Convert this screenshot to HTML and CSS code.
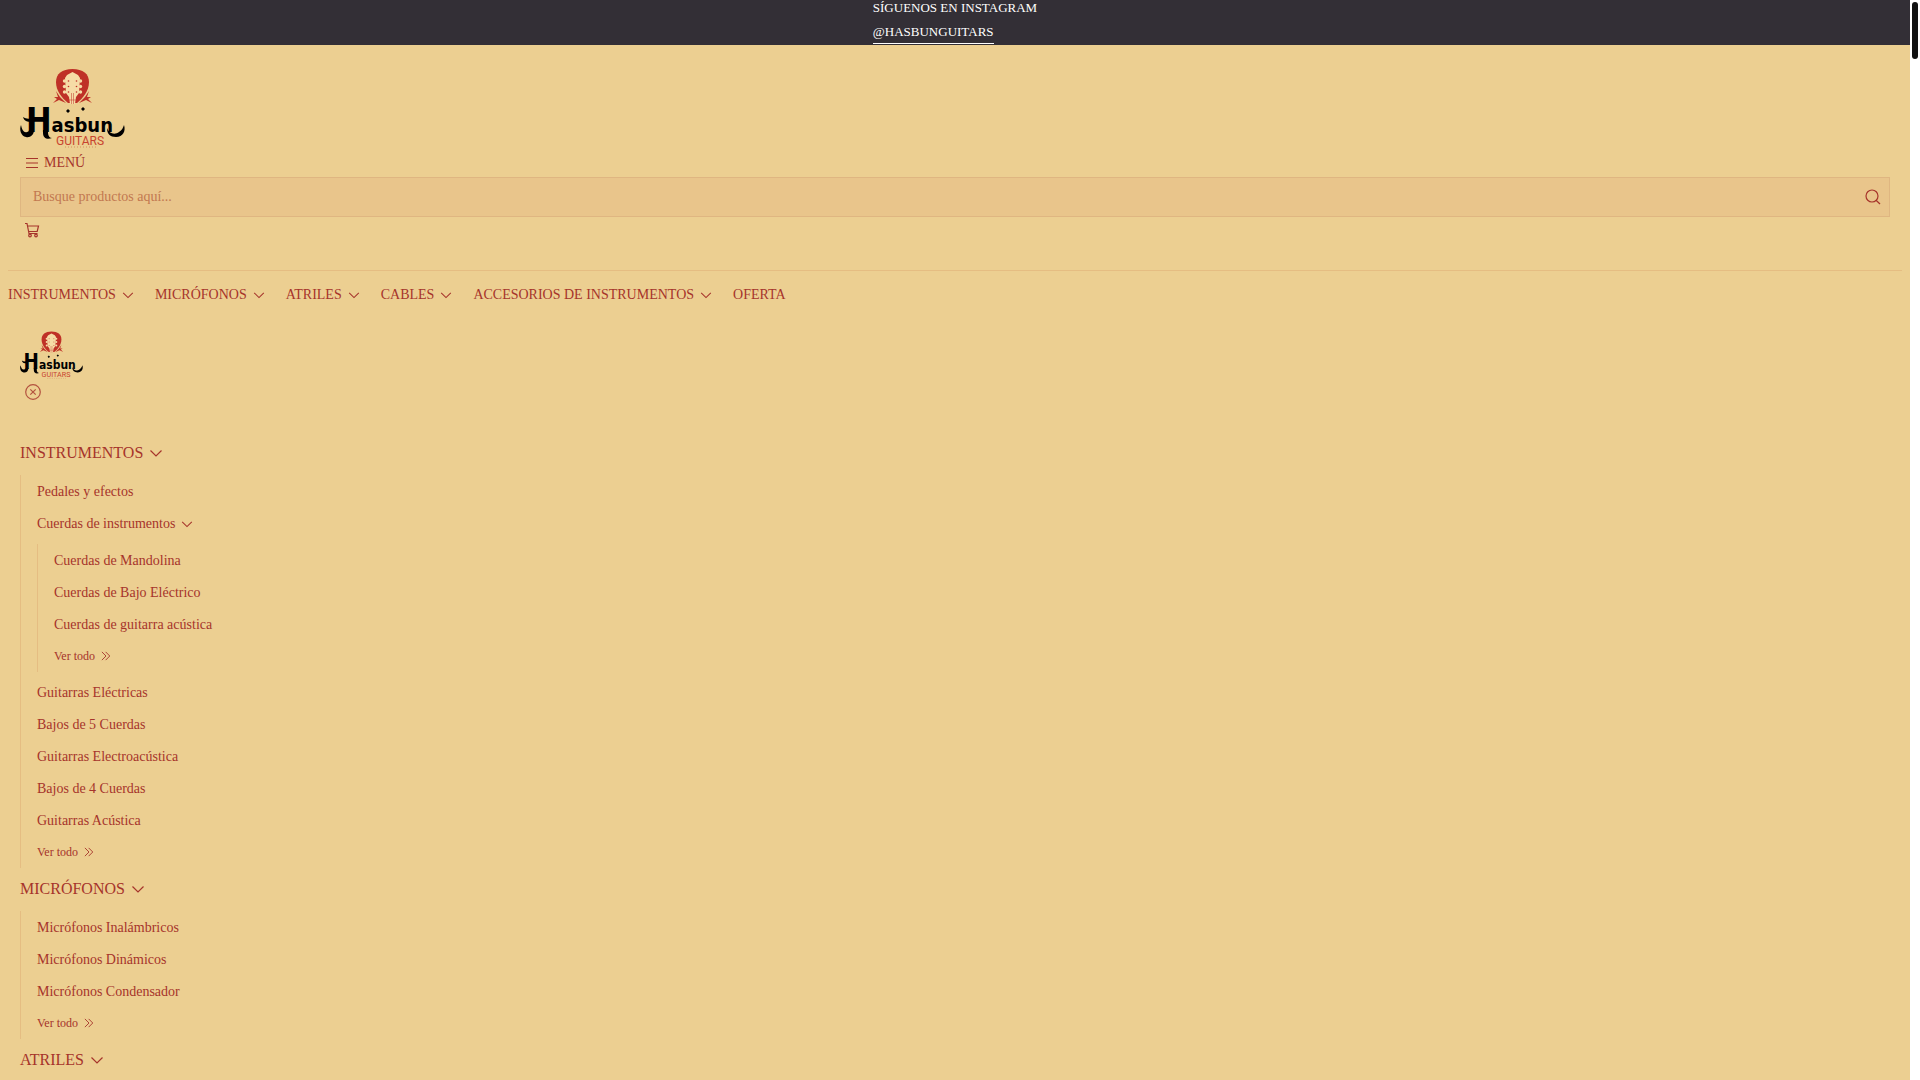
FILE: index.html
```html
<!DOCTYPE html>
<html lang="es">
<head>
    <meta charset="UTF-8">
    <meta name="viewport" content="width=device-width, initial-scale=1.0">
    <title>Hasbun Guitars</title>
    <link rel="stylesheet" href="styles.css">
</head>
<body>
    <!-- Shared icons -->
    <svg class="sprite" aria-hidden="true">
        <symbol id="logo" viewBox="0 0 105 80">
            <path fill="#bf3127" d="M52.500 1C42 1 36 6 36 14C36 23 42 30 48 35L57 35C63 30 69 23 69 14C69 6 63 1 52.500 1Z"/>
            <path fill="#f6dca6" d="M47 7L52.500 4L58 7L60 10L59 25L56 29L55 36H50L49 29L46 25L45 10Z"/>
            <g fill="#f6dca6">
                <circle cx="44.500" cy="13" r="1.700"/><circle cx="44.500" cy="18.500" r="1.700"/><circle cx="44.500" cy="24" r="1.700"/>
                <circle cx="60.500" cy="13" r="1.700"/><circle cx="60.500" cy="18.500" r="1.700"/><circle cx="60.500" cy="24" r="1.700"/>
            </g>
            <g fill="#bf3127">
                <circle cx="48.500" cy="13" r="0.800"/><circle cx="48.500" cy="18.500" r="0.800"/><circle cx="48.500" cy="24" r="0.800"/>
                <circle cx="56.500" cy="13" r="0.800"/><circle cx="56.500" cy="18.500" r="0.800"/><circle cx="56.500" cy="24" r="0.800"/>
            </g>
            <path stroke="#bf3127" stroke-width="0.500" fill="none" d="M51.500 25V36M53.500 25V36M49 32H56"/>
            <path fill="#bf3127" d="M36 23L40 29L46 35L39 32L33 35L37 31L34 29L38 29ZM69 23L65 29L59 35L66 32L72 35L68 31L71 29L67 29Z"/>
            <!-- flourishes around the name -->
            <path d="M14 62C14 67 10 70 6 69C1 68 -1 62 1 57C2 62 4 65 7 64C8 64 9 63 9 62ZM3 49C6 51 9 51 12 50V54C7 54 4 53 3 49ZM23 62H28V65C28 68 30 70 32 70C27 72 23 70 23 65Z"/>
            <path d="M87 60C89 66 95 67 99 64C102 62 103 60 104 57C106 63 103 69 96 69C90 69 87 66 87 60Z"/>
            <path d="M46 43L48 41L50 43L48 45ZM61 41L63 39L65 41L63 43Z"/>
            <text class="logo-name" x="6" y="64"><tspan class="logo-initial">H</tspan>asbun</text>
            <text class="logo-sub" x="36" y="77">GUITARS</text>
            <path stroke="#cf704e" stroke-width="0.700" stroke-dasharray="1 2" d="M45 79H78"/>
        </symbol>
        <symbol id="down" viewBox="0 0 16 16">
            <path d="M2.500 5.500L8 11L13.500 5.500"/>
        </symbol>
        <symbol id="more" viewBox="0 0 16 16">
            <path d="M2.500 2.500L8 8L2.500 13.500M7.500 2.500L13 8L7.500 13.500"/>
        </symbol>
    </svg>

    <div class="page">
        <div class="topbar">
            <div class="topbar-text">
                <span>SÍGUENOS EN INSTAGRAM</span>
                <a href="#">@HASBUNGUITARS</a>
            </div>
        </div>

        <header class="header">
            <a href="#" class="logo" aria-label="Hasbun Guitars"><svg><use href="#logo"/></svg></a>
            <button type="button" class="menu-button">
                <svg class="icon" viewBox="0 0 16 16"><path d="M2 3.500H14M2 8H14M2 12.500H14"/></svg>
                MENÚ
            </button>
            <form class="search">
                <input type="text" placeholder="Busque productos aquí..." aria-label="Buscar productos">
                <button type="button" aria-label="Buscar">
                    <svg class="icon" viewBox="0 0 16 16"><circle cx="7" cy="7" r="6"/><path d="M11 11.200L15 15"/></svg>
                </button>
            </form>
            <a href="#" class="cart" aria-label="Carrito">
                <svg class="icon" viewBox="0 0 16 16"><path d="M1 1.500H3L5 11.500H13.500M3.600 4H14.500L13.200 9.500H4.800"/><circle cx="6" cy="13.500" r="1.300"/><circle cx="12" cy="13.500" r="1.300"/></svg>
            </a>
        </header>

        <nav class="main-nav">
            <a href="#">INSTRUMENTOS <svg class="arrow"><use href="#down"/></svg></a>
            <a href="#">MICRÓFONOS <svg class="arrow"><use href="#down"/></svg></a>
            <a href="#">ATRILES <svg class="arrow"><use href="#down"/></svg></a>
            <a href="#">CABLES <svg class="arrow"><use href="#down"/></svg></a>
            <a href="#">ACCESORIOS DE INSTRUMENTOS <svg class="arrow"><use href="#down"/></svg></a>
            <a href="#">OFERTA</a>
        </nav>

        <div class="side-menu">
            <a href="#" class="logo logo-small" aria-label="Hasbun Guitars"><svg><use href="#logo"/></svg></a>
            <button type="button" class="close-button" aria-label="Cerrar">
                <svg class="icon" viewBox="0 0 16 16"><circle cx="8" cy="8" r="7.300"/><path d="M5.300 5.300L10.700 10.700M10.700 5.300L5.300 10.700"/></svg>
            </button>

            <nav class="side-nav">
                <a href="#" class="side-title">INSTRUMENTOS <svg class="arrow"><use href="#down"/></svg></a>
                <ul>
                    <li><a href="#">Pedales y efectos</a></li>
                    <li>
                        <a href="#">Cuerdas de instrumentos <svg class="arrow"><use href="#down"/></svg></a>
                        <ul>
                            <li><a href="#">Cuerdas de Mandolina</a></li>
                            <li><a href="#">Cuerdas de Bajo Eléctrico</a></li>
                            <li><a href="#">Cuerdas de guitarra acústica</a></li>
                            <li><a href="#" class="see-all">Ver todo <svg class="arrow"><use href="#more"/></svg></a></li>
                        </ul>
                    </li>
                    <li><a href="#">Guitarras Eléctricas</a></li>
                    <li><a href="#">Bajos de 5 Cuerdas</a></li>
                    <li><a href="#">Guitarras Electroacústica</a></li>
                    <li><a href="#">Bajos de 4 Cuerdas</a></li>
                    <li><a href="#">Guitarras Acústica</a></li>
                    <li><a href="#" class="see-all">Ver todo <svg class="arrow"><use href="#more"/></svg></a></li>
                </ul>
                <a href="#" class="side-title">MICRÓFONOS <svg class="arrow"><use href="#down"/></svg></a>
                <ul>
                    <li><a href="#">Micrófonos Inalámbricos</a></li>
                    <li><a href="#">Micrófonos Dinámicos</a></li>
                    <li><a href="#">Micrófonos Condensador</a></li>
                    <li><a href="#" class="see-all">Ver todo <svg class="arrow"><use href="#more"/></svg></a></li>
                </ul>
                <a href="#" class="side-title">ATRILES <svg class="arrow"><use href="#down"/></svg></a>
            </nav>
        </div>
    </div>
    <div class="scrollbar"><div class="thumb"></div></div>
</body>
</html>
```
FILE: styles.css
```css
* {
    box-sizing: border-box;
}

body {
    margin: 0;
    height: 100vh;
    display: flex;
    overflow: hidden;
    background-color: #eccf91;
    color: #a6342b;
    font-family: "Liberation Serif", "Times New Roman", serif;
    font-size: 14px;
}

a {
    color: inherit;
    text-decoration: none;
}

button {
    padding: 0;
    border: none;
    background: none;
    color: inherit;
    font: inherit;
    cursor: pointer;
}

.sprite {
    position: absolute;
    width: 0;
    height: 0;
}

.page {
    flex: 1;
}

.icon, .arrow {
    width: 16px;
    height: 16px;
    fill: none;
    stroke: currentColor;
    stroke-width: 1.2;
}

/* Top bar */
.topbar {
    display: flex;
    justify-content: center;
    padding-bottom: 1px;
    background-color: #332f36;
    color: #fff;
    font-size: 13px;
    line-height: 15px;
}

.topbar-text {
    display: flex;
    flex-direction: column;
    align-items: flex-start;
    gap: 9px;
}

.topbar a {
    padding-bottom: 4px;
    border-bottom: 1px solid #fff;
}

/* Header */
.header {
    display: flex;
    flex-direction: column;
    align-items: flex-start;
    padding: 23px 20px 27px;
}

.logo svg {
    display: block;
    width: 105px;
    height: 80px;
    overflow: visible;
}

.logo-small svg {
    width: 63px;
    height: 48px;
}

#logo {
    overflow: visible;
}

.logo-name {
    font-family: "DejaVu Sans Condensed", "DejaVu Sans", sans-serif;
    font-size: 20px;
    font-weight: bold;
    fill: #000;
}

.logo-initial {
    font-size: 34px;
}

.logo-sub {
    font-family: Roboto, sans-serif;
    font-size: 12px;
    fill: #c8442f;
}

.menu-button {
    display: flex;
    align-items: center;
    gap: 4px;
    height: 29px;
    padding-left: 4px;
}

.search {
    display: flex;
    align-items: center;
    width: 100%;
    height: 40px;
    border: 1px solid #dfb681;
    background-color: #e9c58b;
}

.search input {
    flex: 1;
    height: 100%;
    padding: 0 12px;
    border: none;
    outline: none;
    background: none;
    color: inherit;
    font: inherit;
}

.search input::placeholder {
    color: #c27850;
}

.search button {
    padding: 0 8px;
}

.search .icon, .cart .icon, .close-button .icon {
    display: block;
}

.cart {
    padding: 5px 4px;
}

/* Main navigation */
.main-nav {
    display: flex;
    gap: 20px;
    margin: 0 8px;
    border-top: 1px solid #e5bd82;
    line-height: 47px;
}

.main-nav a, .side-nav a {
    display: flex;
    align-items: center;
    gap: 5px;
}

.arrow {
    width: 14px;
    height: 14px;
}

/* Side menu */
.side-menu {
    padding: 13px 20px;
}

.close-button {
    display: block;
    margin-bottom: 27px;
    padding: 5px;
    opacity: 0.8;
}

.side-nav ul {
    margin: 0;
    padding: 0 0 0 16px;
    border-left: 1px solid #e5bd82;
    list-style: none;
}

.side-nav ul ul {
    margin: 5px 0 4px;
}

.side-nav a {
    padding-top: 2px;
    line-height: 30px;
}

.side-nav .side-title {
    padding: 0 0 2px;
    font-size: 16px;
    line-height: 41px;
}

.side-title .arrow {
    width: 16px;
    height: 16px;
}

.side-nav .see-all {
    padding: 1px 0;
    font-size: 12px;
}

.see-all .arrow {
    width: 12px;
    height: 12px;
}

/* Scrollbar */
.scrollbar {
    width: 10px;
    padding: 2px;
    background-color: #fff;
}

.thumb {
    height: 57px;
    border-radius: 3px;
    background-color: #111;
}
```
